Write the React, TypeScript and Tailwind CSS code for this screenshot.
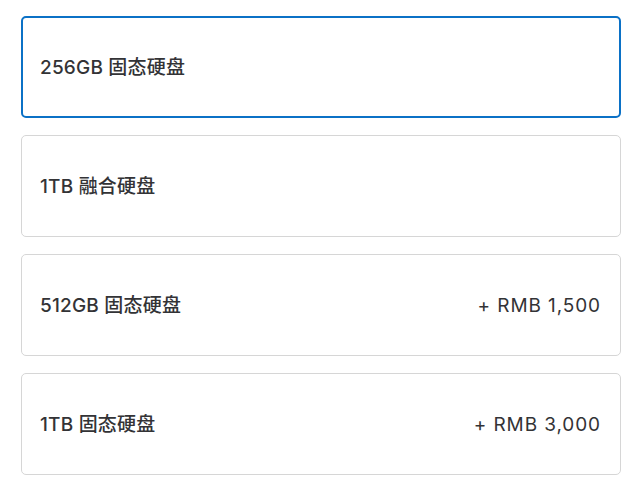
import React from 'react';

interface StorageOption {
  label: string;
  price?: string;
  selected?: boolean;
}

const options: StorageOption[] = [
  { label: '256GB 固态硬盘', selected: true },
  { label: '1TB 融合硬盘' },
  { label: '512GB 固态硬盘', price: '+ RMB 1,500' },
  { label: '1TB 固态硬盘', price: '+ RMB 3,000' },
];

const App: React.FC = () => {
  return (
    <div
      className="min-h-screen bg-white pt-4 pl-[21px] text-[#333336]"
      style={{ fontFamily: 'Inter, "Noto Sans CJK SC", sans-serif' }}
    >
      <div className="flex w-[600px] flex-col gap-[17px]">
        {options.map((opt) => (
          <div
            key={opt.label}
            className={`flex h-[102px] items-center justify-between rounded-[5px] pt-[3px] ${
              opt.selected ? 'border-2 border-[#0b71c6] pr-[18px] pl-[17px]' : 'border border-[#d6d6d6] pr-[19px] pl-[18px]'
            }`}
          >
            <span className="text-[19px] font-medium tracking-[0.2px]">{opt.label}</span>
            {opt.price && <span className="text-[19px] font-normal tracking-[0.9px]">{opt.price}</span>}
          </div>
        ))}
      </div>
    </div>
  );
};

export default App;
